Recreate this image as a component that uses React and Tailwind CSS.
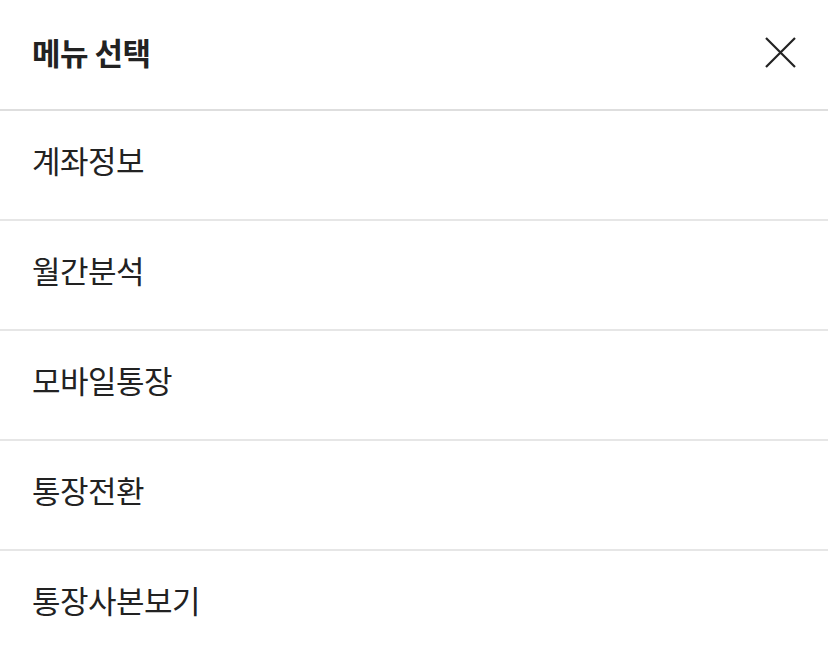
export default function App() {
  const items = ["계좌정보", "월간분석", "모바일통장", "통장전환", "통장사본보기"];
  return (
    <div
      className="w-[828px] h-[646px] bg-white overflow-hidden text-[#222]"
      style={{ fontFamily: '"Noto Sans CJK KR", "Noto Sans", sans-serif' }}
    >
      <div className="h-[111px] border-b-2 border-[#dedede] flex items-center justify-between pl-[32px] pr-[32px] pb-[5px]">
        <h1 className="text-[31px] font-bold tracking-[-0.5px]">메뉴 선택</h1>
        <svg width="31" height="31" viewBox="0 0 31 31" className="text-[#222]">
          <path d="M1 1L30 30M30 1L1 30" stroke="currentColor" strokeWidth="2.2" fill="none" />
        </svg>
      </div>
      {items.map((t) => (
        <div
          key={t}
          className="h-[110px] border-b-2 border-[#e6e6e6] flex items-center pl-[32px] pb-[10px]"
        >
          <span className="text-[31px] tracking-[-0.5px]">{t}</span>
        </div>
      ))}
    </div>
  );
}
